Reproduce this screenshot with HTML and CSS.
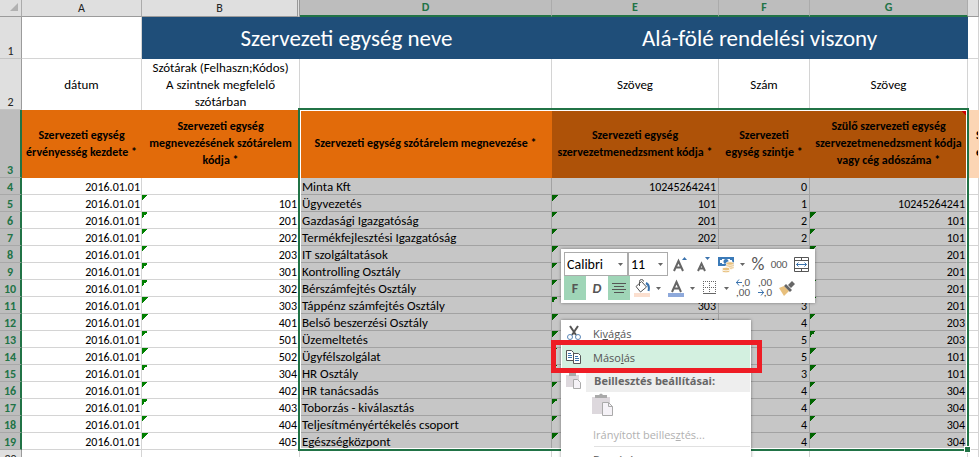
FILE: index.html
```
<!DOCTYPE html>
<html lang="hu">
<head>
    <meta charset="UTF-8">
    <meta name="viewport" content="width=device-width, initial-scale=1.0">
    <title>Szervezeti egységek</title>
    <link rel="stylesheet" href="styles.css">
</head>
<body>
    <div class="sheet">
        <table class="grid">
            <colgroup>
                <col class="col-num">
                <col class="col-a">
                <col class="col-b">
                <col class="col-d">
                <col class="col-e">
                <col class="col-f">
                <col class="col-g">
                <col class="col-h">
            </colgroup>
            <thead>
                <tr>
                    <th class="corner"><svg width="10" height="10"><path d="M9 0v8H1z" fill="#b1b1b1"/></svg></th>
                    <th>A</th>
                    <th class="before-hidden">B</th>
                    <th class="on">D</th>
                    <th class="on">E</th>
                    <th class="on">F</th>
                    <th class="on">G</th>
                    <th></th>
                </tr>
            </thead>
            <tbody id="rows">
                <tr class="row-title">
                    <th>1</th>
                    <td></td>
                    <td colspan="2" class="banner">Szervezeti egység neve</td>
                    <td colspan="3" class="banner">Alá-fölé rendelési viszony</td>
                    <td></td>
                </tr>
                <tr class="row-type">
                    <th>2</th>
                    <td>dátum</td>
                    <td>Szótárak (Felhaszn;Kódos)<br>A szintnek megfelelő<br>szótárban</td>
                    <td></td>
                    <td>Szöveg</td>
                    <td>Szám</td>
                    <td>Szöveg</td>
                    <td></td>
                </tr>
                <tr class="row-head">
                    <th class="on">3</th>
                    <td>Szervezeti egység<br>érvényesség kezdete *</td>
                    <td>Szervezeti egység<br>megnevezésének szótárelem<br>kódja *</td>
                    <td>Szervezeti egység szótárelem megnevezése *</td>
                    <td class="dark">Szervezeti egység<br>szervezetmenedzsment kódja *</td>
                    <td class="dark">Szervezeti<br>egység szintje *</td>
                    <td class="dark note">Szülő szervezeti egység<br>szervezetmenedzsment kódja<br>vagy cég adószáma *</td>
                    <td class="next">Szervezeti<br>egység</td>
                </tr>
            </tbody>
        </table>

        <div class="selection"><span class="handle"></span></div>

        <div class="mini-toolbar">
            <div class="tool-row">
                <label class="pick pick-font">
                    <select aria-label="Betűtípus"><option>Calibri</option></select>
                    <svg width="5" height="3"><path d="M0 0h5L2.500 3z"/></svg>
                </label>
                <label class="pick pick-size">
                    <select aria-label="Betűméret"><option>11</option></select>
                    <svg width="5" height="3"><path d="M0 0h5L2.500 3z"/></svg>
                </label>
                <button class="tool grow" aria-label="Betűméret növelése">
                    <svg width="14" height="18" fill="none" stroke="#666" stroke-width="2"><path d="M1 16L5.500 6L10 16M2.500 12.500h6"/><path d="M9 5l2.500-3L14 5z" fill="#3b73ad" stroke="none"/></svg>
                </button>
                <button class="tool" aria-label="Betűméret csökkentése">
                    <svg width="14" height="18" fill="none" stroke="#666" stroke-width="2"><path d="M2 16L5.500 8.500L9 16M3.500 13.500h4"/><path d="M9 2h5L11.500 5z" fill="#3b73ad" stroke="none"/></svg>
                </button>
                <button class="tool wide" aria-label="Könyvelési számformátum">
                    <svg width="17" height="18"><path d="M0 2h16v9H0z" fill="#3b7ab8"/><path d="M2 4h12v5H2z" fill="#fff"/><path d="M2 4h2v1H2zM2 8h2v1H2zM12 4h2v1h-2z" fill="#3b7ab8"/><circle cx="8" cy="6.500" r="2.500" fill="#3b7ab8"/><g fill="#e8c07d" stroke="#fff" stroke-width=".8"><ellipse cx="12" cy="12.500" rx="4" ry="1.800"/><ellipse cx="12" cy="10.500" rx="4" ry="1.800"/><ellipse cx="12" cy="8.500" rx="4" ry="1.800"/><ellipse cx="8" cy="16" rx="4" ry="1.800"/><ellipse cx="8" cy="14" rx="4" ry="1.800"/></g></svg>
                    <svg class="arrow" width="5" height="3"><path d="M0 0h5L2.500 3z"/></svg>
                </button>
                <button class="tool narrow percent">%</button>
                <button class="tool zeros">000</button>
                <button class="tool" aria-label="Cellaegyesítés">
                    <svg width="15" height="15" fill="none" stroke="#555"><path d="M.5.500h14v14H.5zM.5 3.500h14M.5 11.500h14M7.500 0v4M7.500 11v4"/><path d="M2.500 7.500h10M4.500 5.500l-2 2l2 2M10.500 5.500l2 2l-2 2" stroke="#3b73ad"/></svg>
                </button>
            </div>
            <div class="tool-row">
                <button class="tool bold pressed">F</button>
                <button class="tool italic">D</button>
                <button class="tool pressed" aria-label="Középre igazítás">
                    <svg width="14" height="12" stroke="#555"><path d="M0 1.500h14M2 4.500h10M0 7.500h14M2 10.500h10"/></svg>
                </button>
                <button class="tool wide" aria-label="Kitöltőszín">
                    <svg width="17" height="18" fill="none" stroke="#555"><path d="M7.500 2.500l5 5.500l-6 5l-4.500-5.500zM5.500 7V2.500q0-2 2-2t2 2"/><path d="M12 4q4 2 2.500 8" stroke="#3b73ad" stroke-width="2"/><path d="M0 14h16v4H0z" fill="#fbdfcf" stroke="none"/></svg>
                    <svg class="arrow" width="5" height="3"><path d="M0 0h5L2.500 3z"/></svg>
                </button>
                <button class="tool wide" aria-label="Betűszín">
                    <svg width="17" height="18" fill="none" stroke="#666" stroke-width="2"><path d="M4 13L8.500 3L13 13M5.500 9.500h6"/><path d="M0 14h16v4H0z" fill="#8ea9db" stroke="none"/></svg>
                    <svg class="arrow" width="5" height="3"><path d="M0 0h5L2.500 3z"/></svg>
                </button>
                <button class="tool wide" aria-label="Szegélyek">
                    <svg width="17" height="18" fill="none" stroke="#666"><path d="M1.500 2v12M7.500 2v12M13.500 2v12M1 2.500h13M1 8.500h13" stroke-dasharray="1 1"/><path d="M1 14.500h13"/></svg>
                    <svg class="arrow" width="5" height="3"><path d="M0 0h5L2.500 3z"/></svg>
                </button>
                <button class="tool decimals"><svg width="6" height="7" fill="none" stroke="#3b73ad"><path d="M0 3.500h6M3 .5L.5 3.500L3 6.500"/></svg>,0<br>,00</button>
                <button class="tool decimals">,00<br><svg width="6" height="7" fill="none" stroke="#3b73ad"><path d="M0 3.500h6M3 .5L5.500 3.500L3 6.500"/></svg>,0</button>
                <button class="tool" aria-label="Formátummásoló">
                    <svg width="16" height="15"><path d="M0 7l5-2l5 5l-5 5z" fill="#e8c07d"/><path d="M5 5l2-2l6 6l-2 2zM9 4l4-4l3 3l-4 4z" fill="#666"/></svg>
                </button>
            </div>
        </div>

        <div class="menu">
            <button class="item">
                <svg width="16" height="16" fill="none"><path d="M4 1l6 9M12 1L6 10" stroke="#555" stroke-width="2"/><circle cx="4" cy="12" r="2.500" stroke="#5b87b8"/><circle cx="12" cy="12" r="2.500" stroke="#5b87b8"/></svg>
                <span>Ki<u>v</u>ágás</span>
            </button>
            <button class="item active">
                <svg width="16" height="16" fill="#fff" stroke="#555"><path d="M.5 1.500h5l2 2v8h-7zM7.500 4.500h5l2 2v8h-7z"/><path d="M2 4.500h3M2 6.500h4M2 8.500h4M9 7.500h3M9 9.500h4M9 11.500h4" stroke="#3b73ad"/></svg>
                <span>Máso<u>l</u>ás</span>
            </button>
            <div class="group">
                <svg width="16" height="16"><path d="M0 2h13v12H0z" fill="#ddd8dd"/><path d="M3 0h7v3H3z" fill="#aaa"/><path d="M7.500 6.500h4l3 3v6h-7z" fill="#f5f2f7" stroke="#aaa"/></svg>
                <span>Beillesztés beállításai:</span>
            </div>
            <button class="paste" aria-label="Beillesztés">
                <svg width="22" height="24"><path d="M0 4h18v17H0z" fill="#ddd8dd"/><path d="M3 5V2h4q2-3 4 0h4v3z" fill="#aaa"/><path d="M10.500 9.500h6l4 4v9h-10z" fill="#f5f2f7" stroke="#aaa"/><path d="M16.500 9.500v4h4" fill="none" stroke="#aaa"/></svg>
            </button>
            <button class="item" disabled><span>Irányított beilles<u>z</u>tés...</span></button>
            <hr>
            <button class="item"><span>Bes<u>z</u>úrás...</span></button>
        </div>
        <div class="callout"></div>
    </div>
    <script src="rows.js"></script>
</body>
</html>
```
FILE: rows.js
```
// B kód, D megnevezés, E kód, F szint, G szülő
const units = [
    ["", "Minta Kft", "10245264241", "0", ""],
    ["101", "Ügyvezetés", "101", "1", "10245264241"],
    ["201", "Gazdasági Igazgatóság", "201", "2", "101"],
    ["202", "Termékfejlesztési Igazgatóság", "202", "2", "101"],
    ["203", "IT szolgáltatások", "203", "3", "201"],
    ["301", "Kontrolling Osztály", "301", "3", "201"],
    ["302", "Bérszámfejtés Osztály", "302", "3", "201"],
    ["303", "Táppénz számfejtés Osztály", "303", "3", "201"],
    ["401", "Belső beszerzési Osztály", "401", "4", "203"],
    ["501", "Üzemeltetés", "501", "5", "203"],
    ["502", "Ügyfélszolgálat", "502", "5", "101"],
    ["304", "HR Osztály", "304", "3", "101"],
    ["402", "HR tanácsadás", "402", "4", "304"],
    ["403", "Toborzás - kiválasztás", "403", "4", "304"],
    ["404", "Teljesítményértékelés csoport", "404", "4", "304"],
    ["405", "Egészségközpont", "405", "4", "304"]
];

const body = document.getElementById("rows");

units.forEach(function (u, i) {
    const code = i > 0 ? "flag" : "";
    const parent = i > 1 ? "flag" : "";
    body.insertAdjacentHTML("beforeend",
        `<tr class="row-data"><th class="on">${i + 4}</th><td class="date">2016.01.01</td><td class="${code}">${u[0]}</td>` +
        `<td class="sel name">${u[1]}</td><td class="sel ${code}">${u[2]}</td>` +
        `<td class="sel">${u[3]}</td><td class="sel ${parent}">${u[4]}</td><td></td></tr>`);
});

body.insertAdjacentHTML("beforeend",
    `<tr class="row-data"><th>20</th>${"<td></td>".repeat(7)}</tr>`);
```
FILE: styles.css
```
body {
    margin: 0;
    background: #fff;
    overflow: hidden;
    font-family: Carlito, "Noto Sans", sans-serif;
    font-size: 12px;
    line-height: 16px;
    color: #000;
}

.sheet {
    position: relative;
}

/* grid */
.grid {
    width: 100%;
    table-layout: fixed;
    border-collapse: separate;
    border-spacing: 0;
}

.grid th,
.grid td {
    box-sizing: border-box;
    padding: 0;
    border-right: 1px solid #d4d4d4;
    border-bottom: 1px solid #d4d4d4;
    overflow: hidden;
    white-space: nowrap;
}

.col-num { width: 22px; }
.col-a { width: 120px; }
.col-b { width: 158px; }
.col-d { width: 252px; }
.col-e { width: 167px; }
.col-f { width: 91px; }
.col-g { width: 158px; }

.grid th {
    background: #dfdfdf;
    font-weight: normal;
    color: #222;
}

.grid thead th {
    height: 17px;
    border-right-color: #ababab;
    border-bottom-color: #9b9b9b;
}

.grid thead th.on {
    background: #bdbdbd;
    border-bottom: 2px solid #217346;
    line-height: 15px;
}

.grid thead th.before-hidden {
    border-right: 3px double #999;
}

.corner svg {
    display: block;
    margin-left: 9px;
}

.grid tbody th {
    padding-top: 2px;
    border-right-color: #9b9b9b;
    border-bottom-color: #c4c4c4;
    line-height: 14px;
    vertical-align: bottom;
}

.grid th.on {
    background: #bdbdbd;
    color: #217346;
    font-weight: bold;
}

.grid tbody th.on {
    border-right: 2px solid #217346;
    border-bottom-color: #a8a8a8;
}

.row-title { height: 42px; }
.row-type { height: 51px; }
.row-head { height: 68px; }
.row-data { height: 17px; }

.grid .banner {
    background: #1f4e79;
    border-color: #1f4e79;
    color: #fff;
    font-size: 23px;
    line-height: 28px;
    text-align: center;
}

.row-type td,
.row-head td {
    line-height: 17px;
    text-align: center;
}

.grid .row-type td {
    border-bottom: 0;
    font-size: 13px;
}

.grid .row-head td {
    background: #e26b0a;
    border-color: #e26b0a;
    font-weight: bold;
}

.grid .row-head .dark {
    background: #ae5208;
    border-color: #ae5208;
}

.grid .row-head .note {
    background: linear-gradient(45deg, transparent 50%, #c00 50%) right 1px top 1px / 4px 4px no-repeat #ae5208;
}

.grid .row-head .next {
    background: #fcd5b4;
    border-color: #fcd5b4;
    padding-left: 8px;
    text-align: left;
}

.row-data td {
    line-height: 14px;
    text-align: right;
}

.grid .row-data td {
    padding: 2px 2px 0;
}

.grid .row-data .date {
    padding-right: 1px;
}

.grid .row-data .sel {
    background-color: #c6c6c6;
    border-color: #a2a2a2;
}

.grid .row-data .name {
    font-size: 13px;
    text-align: left;
}

.row-data .flag {
    background: linear-gradient(135deg, #008000 50%, transparent 50%) 0 0 / 6px 6px no-repeat;
}

.row-data .sel.flag {
    background-image: linear-gradient(135deg, #006400 50%, transparent 50%);
}

/* selection frame */
.selection {
    position: absolute;
    left: 298px;
    top: 108px;
    width: 667px;
    height: 339px;
    border: 2px solid #217346;
    box-shadow: inset 0 0 0 1px #fff;
}

.handle {
    position: absolute;
    right: -3px;
    bottom: -3px;
    width: 5px;
    height: 5px;
    background: #217346;
    box-shadow: 0 0 0 1px #fff;
}

/* mini toolbar */
button {
    padding: 0;
    border: 0;
    background: none;
    font-family: inherit;
    color: #555;
}

.mini-toolbar {
    position: absolute;
    left: 561px;
    top: 249px;
    width: 254px;
    box-sizing: border-box;
    padding: 3px;
    background: #fff;
    box-shadow: 0 0 3px rgba(0, 0, 0, 0.4);
}

.tool-row {
    display: flex;
}

.pick {
    box-sizing: border-box;
    display: flex;
    align-items: center;
    height: 24px;
    padding-right: 4px;
    border: 1px solid #ababab;
}

.pick-font { width: 64px; }
.pick-size { width: 40px; }

.pick select {
    flex: 1;
    min-width: 0;
    padding: 0 0 0 2px;
    border: 0;
    background: none;
    appearance: none;
    font-family: inherit;
    font-size: 14px;
    color: #000;
}

.pick svg,
.arrow {
    fill: #666;
}

.tool {
    width: 22px;
    height: 24px;
    display: flex;
    align-items: center;
    justify-content: center;
}

.grow { width: 24px; }

.wide {
    width: 34px;
    gap: 5px;
}

.narrow { width: 20px; }
.pressed { background: #9fd5b7; }

.percent { font-size: 18px; }
.zeros { font-size: 11px; }

.bold {
    font-size: 14px;
    font-weight: bold;
}

.italic {
    font-size: 14px;
    font-weight: bold;
    font-style: italic;
}

.decimals {
    display: block;
    font-size: 11px;
    line-height: 10px;
    text-align: right;
    padding-right: 4px;
}

/* context menu */
.menu {
    position: absolute;
    left: 561px;
    top: 320px;
    width: 190px;
    box-sizing: border-box;
    padding: 1px;
    background: #fff;
    box-shadow: 0 0 3px rgba(0, 0, 0, 0.4);
    font-family: "Open Sans", sans-serif;
    font-size: 11px;
}

.item {
    display: grid;
    grid-template-columns: 31px 1fr;
    align-items: center;
    width: 100%;
    height: 24px;
    font-size: 11px;
    text-align: left;
}

.item svg,
.group svg {
    margin-left: 4px;
}

.item span {
    grid-column: 2;
    grid-row: 1;
}

.item:disabled {
    color: #b1b1b1;
}

.active {
    background: #d3f0e0;
}

.group {
    display: grid;
    grid-template-columns: 24px 1fr;
    align-items: center;
    height: 23px;
    font-weight: bold;
    color: #666;
}

.group span {
    padding-left: 8px;
    background: #eee;
    line-height: 23px;
}

.paste {
    display: block;
    height: 30px;
    margin-left: 30px;
}

.menu hr {
    margin: 0 0 0 32px;
    border: 0;
    border-top: 1px solid #e1e1e1;
}

.callout {
    position: absolute;
    left: 551px;
    top: 340px;
    width: 211px;
    height: 33px;
    box-sizing: border-box;
    border: 5px solid #ee1c25;
}
```
